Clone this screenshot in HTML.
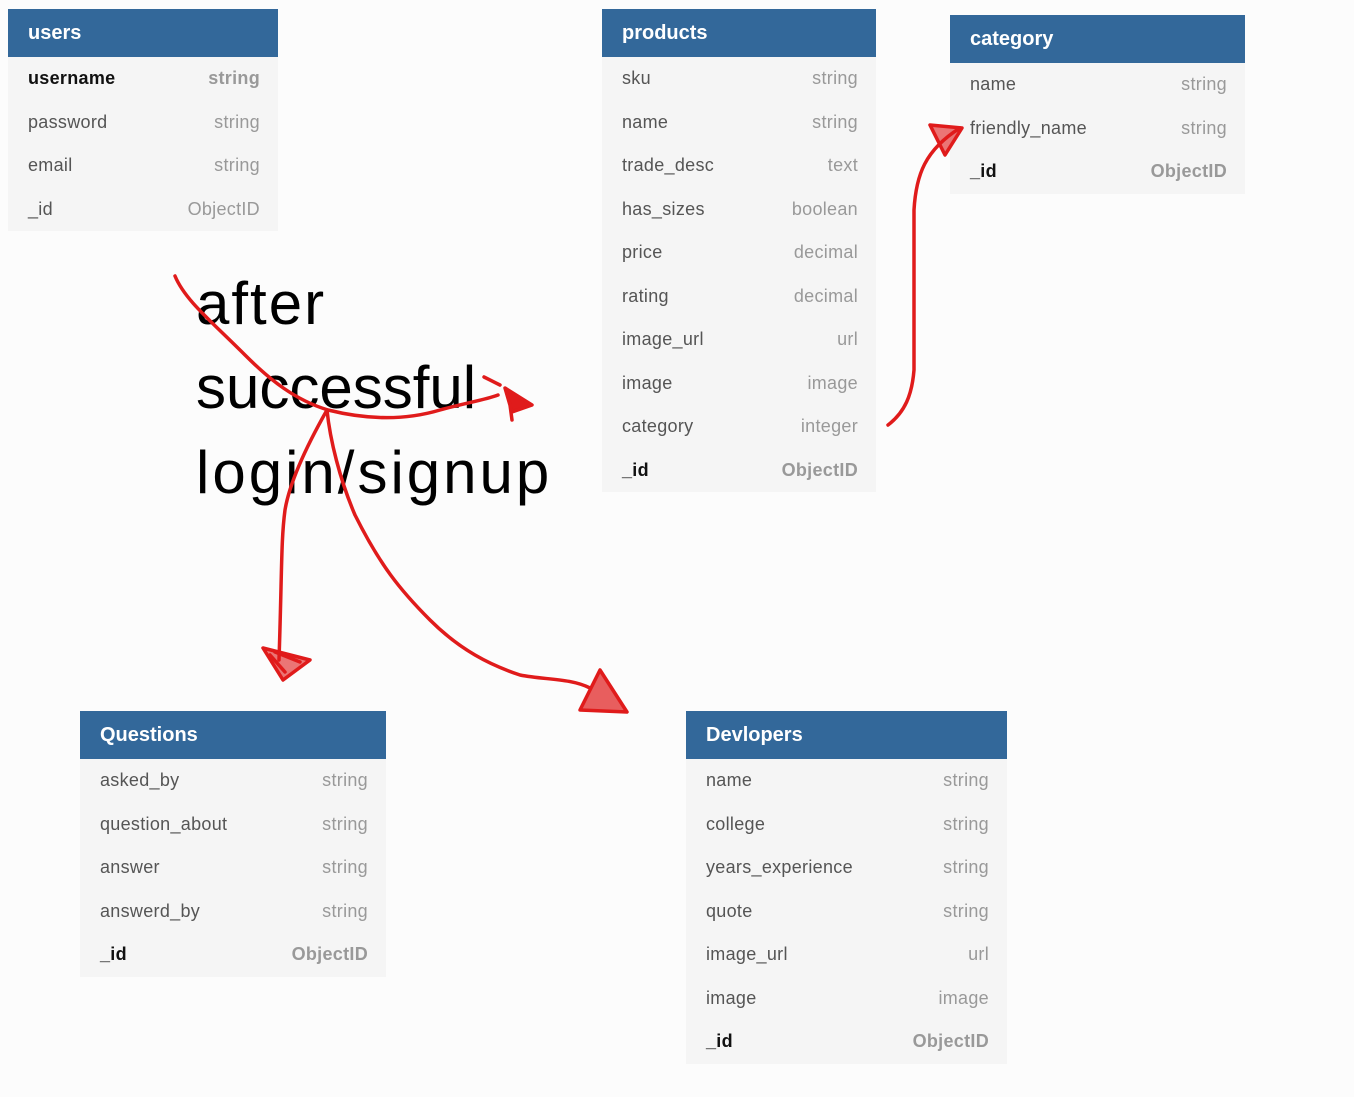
<!DOCTYPE html>
<html><head><meta charset="utf-8"><style>
body{margin:0;width:1354px;height:1097px;background:#fcfcfc;position:relative;overflow:hidden;font-family:"Liberation Sans",sans-serif}
.t{position:absolute;background:#f5f5f5}
.h{background:#33689a;color:#fff;font-weight:bold;font-size:20px;height:48px;line-height:48px;padding-left:20px}
.r{height:43.5px;line-height:43.5px;padding:0 18px 0 20px;font-size:18px;color:#555;display:flex;justify-content:space-between;letter-spacing:0.3px}
.r span:last-child{color:#999}
.b{font-weight:bold;color:#111}.b span:last-child{color:#999}
.big{position:absolute;left:196px;font-size:60px;color:#000;line-height:1}
</style></head><body>
<div class="t" style="left:8px;top:9px;width:270px"><div class="h">users</div>
<div class="r b"><span>username</span><span>string</span></div>
<div class="r"><span>password</span><span>string</span></div>
<div class="r"><span>email</span><span>string</span></div>
<div class="r"><span>_id</span><span>ObjectID</span></div></div>

<div class="t" style="left:602px;top:9px;width:274px"><div class="h">products</div>
<div class="r"><span>sku</span><span>string</span></div>
<div class="r"><span>name</span><span>string</span></div>
<div class="r"><span>trade_desc</span><span>text</span></div>
<div class="r"><span>has_sizes</span><span>boolean</span></div>
<div class="r"><span>price</span><span>decimal</span></div>
<div class="r"><span>rating</span><span>decimal</span></div>
<div class="r"><span>image_url</span><span>url</span></div>
<div class="r"><span>image</span><span>image</span></div>
<div class="r"><span>category</span><span>integer</span></div>
<div class="r b"><span>_id</span><span>ObjectID</span></div></div>

<div class="t" style="left:950px;top:15px;width:295px"><div class="h">category</div>
<div class="r"><span>name</span><span>string</span></div>
<div class="r"><span>friendly_name</span><span>string</span></div>
<div class="r b"><span>_id</span><span>ObjectID</span></div></div>

<div class="t" style="left:80px;top:711px;width:306px"><div class="h">Questions</div>
<div class="r"><span>asked_by</span><span>string</span></div>
<div class="r"><span>question_about</span><span>string</span></div>
<div class="r"><span>answer</span><span>string</span></div>
<div class="r"><span>answerd_by</span><span>string</span></div>
<div class="r b"><span>_id</span><span>ObjectID</span></div></div>

<div class="t" style="left:686px;top:711px;width:321px"><div class="h">Devlopers</div>
<div class="r"><span>name</span><span>string</span></div>
<div class="r"><span>college</span><span>string</span></div>
<div class="r"><span>years_experience</span><span>string</span></div>
<div class="r"><span>quote</span><span>string</span></div>
<div class="r"><span>image_url</span><span>url</span></div>
<div class="r"><span>image</span><span>image</span></div>
<div class="r b"><span>_id</span><span>ObjectID</span></div></div>

<div class="big" style="top:274px;letter-spacing:2px">after</div>
<div class="big" style="top:358px">successful</div>
<div class="big" style="top:443px;letter-spacing:3px">login/signup</div>

<svg width="1354" height="1097" style="position:absolute;left:0;top:0" fill="none" stroke="#e01b1b" stroke-width="3.5" stroke-linecap="round" stroke-linejoin="round">
<path d="M175 276 C185 300 210 320 245 355 C270 380 295 400 328 410 C360 418 400 422 440 410 C465 403 485 400 498 395"/>
<path d="M484 377 L500 385 M505 388 L532 405 L512 412 Z M510 405 L512 420" fill="#e01b1b"/>
<path d="M327 410 C310 440 290 480 285 510 C281 540 282 570 279 660"/>
<path d="M263 648 L310 660 L283 680 Z" fill="#e01b1b" fill-opacity="0.6"/>
<path d="M270 655 L285 672 M275 652 L300 662"/>
<path d="M327 410 C330 440 340 480 355 515 C380 565 400 590 430 620 C460 650 490 665 520 675 C545 680 570 678 590 688"/>
<path d="M600 670 L627 712 L580 710 Z" fill="#e01b1b" fill-opacity="0.7"/>
<path d="M888 425 C905 412 912 395 914 370 L914 210 C916 175 925 150 960 128"/>
<path d="M930 125 L962 128 L945 155 Z" fill="#e01b1b" fill-opacity="0.6"/>
</svg>
</body></html>
